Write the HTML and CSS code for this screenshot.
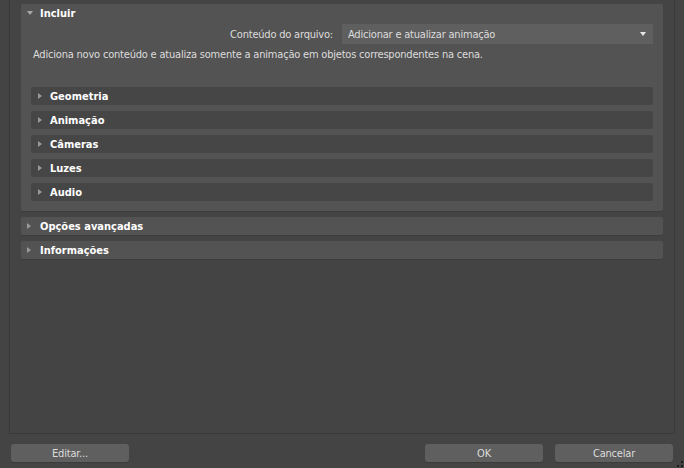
FILE: index.html
```
<!DOCTYPE html>
<html lang="pt">
<head>
<meta charset="utf-8">
<link rel="stylesheet" href="styles.css">
</head>
<body>
<div class="frame">
  <section class="panel open">
    <div class="panel-head"><span class="tri-down"></span><span class="title">Incluir</span></div>
    <div class="field-row">
      <span class="label">Conteúdo do arquivo:</span>
      <div class="select"><span>Adicionar e atualizar animação</span><span class="arrow"></span></div>
    </div>
    <p class="desc">Adiciona novo conteúdo e atualiza somente a animação em objetos correspondentes na cena.</p>
    <div class="subs">
      <div class="sub"><span class="tri-right"></span><span class="title">Geometria</span></div>
      <div class="sub"><span class="tri-right"></span><span class="title">Animação</span></div>
      <div class="sub"><span class="tri-right"></span><span class="title">Câmeras</span></div>
      <div class="sub"><span class="tri-right"></span><span class="title">Luzes</span></div>
      <div class="sub"><span class="tri-right"></span><span class="title">Audio</span></div>
    </div>
  </section>
  <section class="panel closed"><span class="tri-right"></span><span class="title">Opções avançadas</span></section>
  <section class="panel closed"><span class="tri-right"></span><span class="title">Informações</span></section>
</div>
<div class="buttons">
  <button class="btn">Editar...</button>
  <button class="btn btn-ok">OK</button>
  <button class="btn">Cancelar</button>
</div>
<div class="grip"><i></i><i></i><i></i></div>
</body>
</html>
```
FILE: styles.css
```
html, body {
  margin: 0;
  padding: 0;
}
body {
  width: 684px;
  height: 468px;
  background: #444444;
  font-family: "DejaVu Sans Condensed", "DejaVu Sans", sans-serif;
  font-stretch: condensed;
  font-size: 11px;
  color: #dcdcdc;
  overflow: hidden;
  position: relative;
}
.frame {
  margin-left: 9px;
  width: 642px;
  height: 429px;
  border: 1px solid #393939;
  border-top: none;
  padding: 4px 11px 0;
  box-sizing: content-box;
}
.panel {
  background: #535353;
  border-radius: 2px;
  box-shadow: 0 1px 0 #3e3e3e;
}
.panel.open {
  height: 207px;
  display: flex;
  flex-direction: column;
}
.panel-head {
  height: 18px;
  display: flex;
  align-items: center;
}
.title {
  font-weight: bold;
  color: #ffffff;
}
.label, .select span, .desc, .btn {
  letter-spacing: -0.2px;
}
.tri-down {
  width: 0;
  height: 0;
  border-left: 3px solid transparent;
  border-right: 3px solid transparent;
  border-top: 4px solid #a8a8a8;
  margin: 0 7px 0 6px;
}
.tri-right {
  width: 0;
  height: 0;
  border-top: 3px solid transparent;
  border-bottom: 3px solid transparent;
  border-left: 4px solid #9a9a9a;
  margin: 0 9px 0 6px;
}
.field-row {
  margin-top: 2px;
  height: 20px;
  display: flex;
  justify-content: flex-end;
  align-items: center;
  gap: 9px;
  padding-right: 10px;
}
.select {
  width: 311px;
  height: 20px;
  box-sizing: border-box;
  background: #5f5f5f;
  display: flex;
  align-items: center;
  justify-content: space-between;
  padding: 0 7px 0 6px;
  border-radius: 1px;
}
.arrow {
  width: 0;
  height: 0;
  border-left: 3px solid transparent;
  border-right: 3px solid transparent;
  border-top: 4px solid #e8e8e8;
}
.desc {
  margin: 4px 0 0;
  padding-left: 12px;
  line-height: 14px;
}
.subs {
  margin-top: 25px;
  padding: 0 10px;
  display: flex;
  flex-direction: column;
  gap: 6px;
}
.sub {
  height: 18px;
  background: #464646;
  border-radius: 2px;
  display: flex;
  align-items: center;
}
.sub .tri-right {
  margin: 0 8px 0 7px;
}
.panel.closed {
  margin-top: 6px;
  height: 18px;
  display: flex;
  align-items: center;
}
.buttons {
  margin-top: 10px;
  display: flex;
  padding: 0 11px;
  gap: 12px;
}
.btn {
  width: 118px;
  height: 18px;
  background: #5f5f5f;
  border: none;
  border-radius: 3px;
  color: #dcdcdc;
  font: inherit;
  font-size: 11px;
  padding: 0;
  box-shadow: 0 1px 0 #3c3c3c;
}
.btn-ok {
  margin-left: auto;
}
.grip {
  position: absolute;
  right: 1px;
  bottom: 1px;
  width: 6px;
  height: 6px;
}
.grip i {
  position: absolute;
  width: 2px;
  height: 2px;
  background: #1e1e1e;
}
.grip i:nth-child(1) { right: 0; bottom: 0; }
.grip i:nth-child(2) { right: 4px; bottom: 0; }
.grip i:nth-child(3) { right: 0; bottom: 4px; }
```
